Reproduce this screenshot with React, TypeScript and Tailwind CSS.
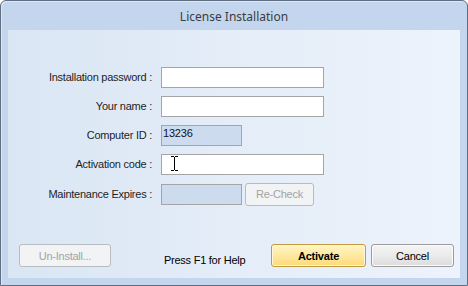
import React from "react";

const font = { fontFamily: '"Liberation Sans", Arial, sans-serif' };

function Label({ children }: { children: React.ReactNode }) {
  return (
    <div className="w-[145px] pr-[1px] text-right text-[11px] tracking-[-0.25px] leading-[21px] text-[#1e1e1e] whitespace-nowrap">
      {children}
    </div>
  );
}

export default function App() {
  return (
    <div className="w-[468px] h-[286px] bg-white" style={font}>
      <div className="w-[468px] h-[286px] flex flex-col border border-[#5f6d80] bg-[#c3d6ed] rounded-t-[6px] shadow-[inset_1px_1px_0_#dde8f6]">
        <div
          className="h-[29px] flex items-center justify-center text-[12px] text-[#3c3c3c] pt-[2px]"
          style={{ fontFamily: '"Noto Sans", "Open Sans", sans-serif' }}
        >
          License Installation
        </div>
        <div className="mx-[7px] h-[248px] flex flex-col bg-gradient-to-r from-[#dae6f4] via-[#e4edf8] to-[#edf3fc] pt-[37px] pb-[10px]">
          <div className="flex flex-col gap-[8px]">
            <div className="flex items-center gap-[8px]">
              <Label>Installation password :</Label>
              <div className="w-[163px] h-[21px] bg-white border border-[#a5a5a5]" />
            </div>
            <div className="flex items-center gap-[8px]">
              <Label>Your name :</Label>
              <div className="w-[163px] h-[21px] bg-white border border-[#a5a5a5]" />
            </div>
            <div className="flex items-center gap-[8px]">
              <Label>Computer ID :</Label>
              <div className="w-[81px] h-[21px] bg-[#cddbef] border border-[#a5a5a5] text-[11px] tracking-[-0.2px] leading-[15px] pl-[1px] text-[#10102a]">
                13236
              </div>
            </div>
            <div className="flex items-center gap-[8px]">
              <Label>Activation code :</Label>
              <div className="relative w-[163px] h-[21px] bg-white border border-[#a5a5a5]">
                <svg
                  className="absolute left-[8px] top-[1px]"
                  width="9"
                  height="15"
                  viewBox="0 0 9 15"
                >
                  <path d="M1 0.5h3M5 0.5h3M1 14.5h3M5 14.5h3M4.5 1v13" stroke="#000" strokeWidth="1" fill="none" />
                </svg>
              </div>
            </div>
            <div className="flex items-center gap-[8px]">
              <Label>Maintenance Expires :</Label>
              <div className="flex items-center gap-[3px]">
                <div className="w-[81px] h-[21px] bg-[#cddbef] border border-[#a5a5a5]" />
                <div className="w-[69px] h-[23px] rounded-[3px] border border-[#b8bcc0] bg-[#f2f3f4] text-[11px] tracking-[-0.25px] text-[#a3a3a3] flex items-center justify-center">
                  Re-Check
                </div>
              </div>
            </div>
          </div>
          <div className="mt-auto flex items-center pl-[11px]">
            <div className="w-[92px] h-[23px] rounded-[3px] border border-[#b8bcc0] bg-[#f2f3f4] text-[11px] tracking-[-0.25px] text-[#a3a3a3] flex items-center justify-center">
              Un-Install...
            </div>
            <div className="ml-[53px] w-[107px] text-[11px] tracking-[-0.25px] text-black pt-[8px]">Press F1 for Help</div>
            <div className="w-[95px] h-[23px] rounded-[3px] border border-[#c29b3e] bg-gradient-to-b from-[#fff4c4] via-[#ffe9a0] to-[#fcd977] text-[11px] tracking-[-0.2px] font-bold text-black flex items-center justify-center shadow-[inset_0_0_0_1px_#fff7d9]">
              Activate
            </div>
            <div className="ml-[5px] w-[83px] h-[23px] rounded-[3px] border border-[#9c9c9c] bg-gradient-to-b from-[#f4f4f4] via-[#ebebeb] to-[#dcdcdc] text-[11px] tracking-[-0.2px] text-black flex items-center justify-center shadow-[inset_0_0_0_1px_#fbfbfb]">
              Cancel
            </div>
          </div>
        </div>
      </div>
    </div>
  );
}
